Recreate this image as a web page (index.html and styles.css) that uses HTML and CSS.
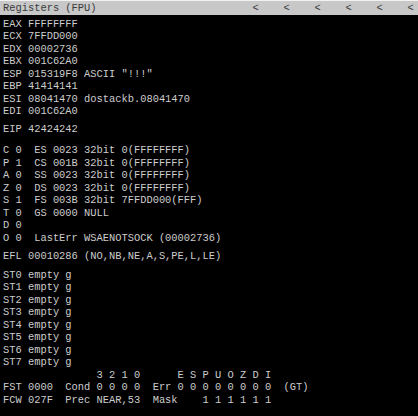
FILE: index.html
```html
<!DOCTYPE html>
<html lang="en">
<head>
    <meta charset="UTF-8">
    <title>Registers (FPU)</title>
    <link rel="stylesheet" href="styles.css">
</head>
<body>
    <div class="pane">
        <div class="titlebar">
            <span class="title">Registers (FPU)</span>
            <div class="arrows">
                <span>&lt;</span><span>&lt;</span><span>&lt;</span><span>&lt;</span><span>&lt;</span><span>&lt;</span>
            </div>
        </div>

        <div class="dump">
            <div class="group gap-sm">
                <div class="line">EAX FFFFFFFF</div>
                <div class="line">ECX 7FFDD000</div>
                <div class="line">EDX 00002736</div>
                <div class="line">EBX 001C62A0</div>
                <div class="line">ESP 015319F8 ASCII "!!!"</div>
                <div class="line">EBP 41414141</div>
                <div class="line">ESI 08041470 dostackb.08041470</div>
                <div class="line">EDI 001C62A0</div>
            </div>

            <div class="group gap-lg">
                <div class="line">EIP 42424242</div>
            </div>

            <div class="group gap-md">
                <div class="line">C 0  ES 0023 32bit 0(FFFFFFFF)</div>
                <div class="line">P 1  CS 001B 32bit 0(FFFFFFFF)</div>
                <div class="line">A 0  SS 0023 32bit 0(FFFFFFFF)</div>
                <div class="line">Z 0  DS 0023 32bit 0(FFFFFFFF)</div>
                <div class="line">S 1  FS 003B 32bit 7FFDD000(FFF)</div>
                <div class="line">T 0  GS 0000 NULL</div>
                <div class="line">D 0</div>
                <div class="line">O 0  LastErr WSAENOTSOCK (00002736)</div>
            </div>

            <div class="group gap-md">
                <div class="line">EFL 00010286 (NO,NB,NE,A,S,PE,L,LE)</div>
            </div>

            <div class="group">
                <div class="line">ST0 empty g</div>
                <div class="line">ST1 empty g</div>
                <div class="line">ST2 empty g</div>
                <div class="line">ST3 empty g</div>
                <div class="line">ST4 empty g</div>
                <div class="line">ST5 empty g</div>
                <div class="line">ST6 empty g</div>
                <div class="line">ST7 empty g</div>
                <div class="line">               3 2 1 0      E S P U O Z D I</div>
                <div class="line">FST 0000  Cond 0 0 0 0  Err 0 0 0 0 0 0 0 0  (GT)</div>
                <div class="line">FCW 027F  Prec NEAR,53  Mask    1 1 1 1 1 1</div>
            </div>
        </div>
    </div>
</body>
</html>
```

FILE: styles.css
```css
html, body {
    margin: 0;
    padding: 0;
    background: #000;
}

body {
    width: 418px;
    height: 416px;
    overflow: hidden;
    font-family: "Liberation Mono", "DejaVu Sans Mono", monospace;
    font-size: 10.4px;
}

.pane {
    display: flex;
    flex-direction: column;
}

.titlebar {
    display: flex;
    align-items: center;
    height: 14px;
    border-top: 1px solid #f2f2f2;
    background: #c8c8c8;
    color: #3a3a3a;
    padding-left: 3px;
    overflow: hidden;
}

.title {
    flex: 1;
    white-space: pre;
}

.arrows {
    display: flex;
    margin-right: -8px;
}

.arrows span {
    width: 31px;
    text-align: center;
}

.dump {
    padding: 2.75px 0 0 3px;
    color: #cdcdcd;
}

.line {
    white-space: pre;
    line-height: 12.5px;
    height: 12.5px;
}

.gap-sm {
    margin-bottom: 5.5px;
}

.gap-md {
    margin-bottom: 6px;
}

.gap-lg {
    margin-bottom: 8.5px;
}
```
